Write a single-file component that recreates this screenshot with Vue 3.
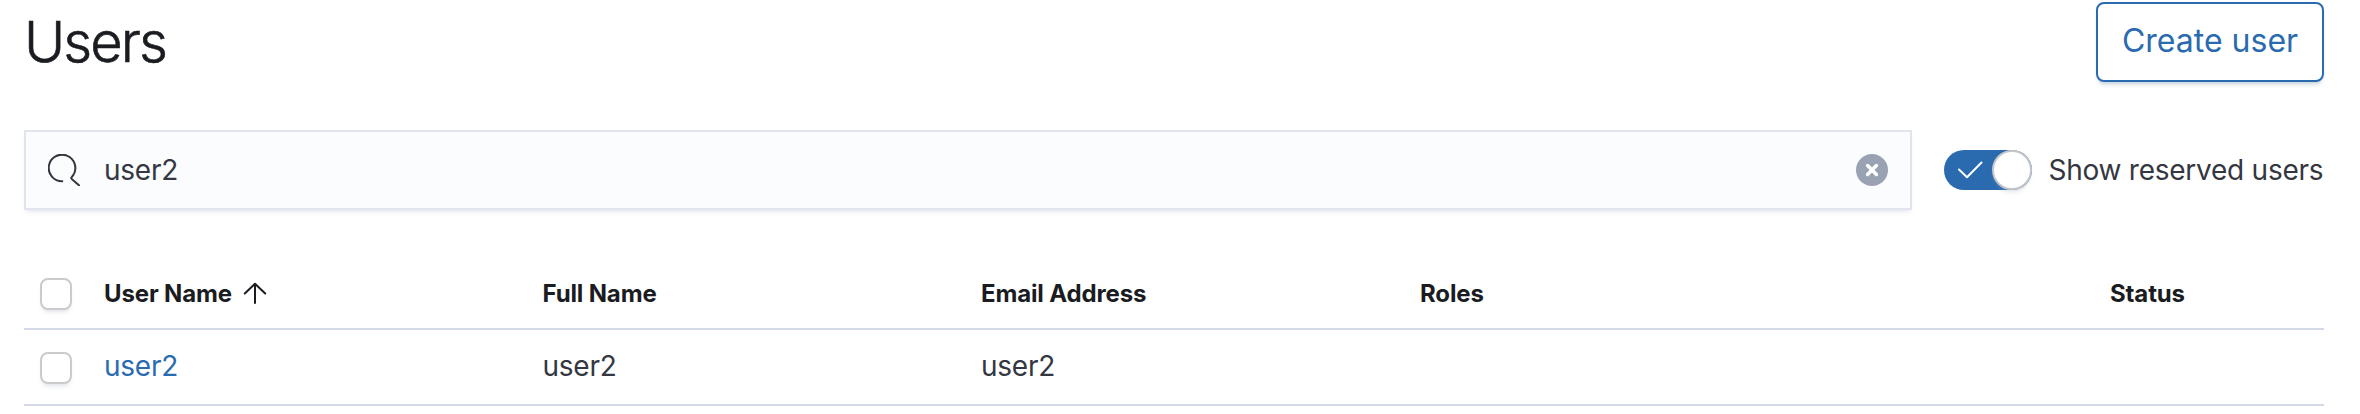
<script setup>
const headers = ['Full Name', 'Email Address', 'Roles', 'Status']
</script>

<template>
  <main class="page">
    <header class="top">
      <h1>Users</h1>
      <button class="create">Create user</button>
    </header>
    <div class="tools">
      <div class="search">
        <svg class="lens" width="32" height="32" viewBox="0 0 32 32"><path d="M14.3 27.3A13.3 13.3 0 1 1 25.2 21.2L23.2 23.8Q23.3 24.6 24 25.2L31 31.3" /></svg>
        <span class="query">user2</span>
        <svg class="clear" width="32" height="32" viewBox="0 0 32 32"><circle cx="16" cy="16" r="16" /><path d="M11.6 11.6L20.4 20.4M20.4 11.6L11.6 20.4" /></svg>
      </div>
      <div class="toggle"><svg width="26" height="20" viewBox="0 0 26 20"><path d="M2 9.5L10 17.2L24.5 2.5" /></svg><i></i></div>
      <span class="label">Show reserved users</span>
    </div>
    <div class="row head">
      <i class="box"></i>
      <span class="cell">User Name<svg class="arrow" width="24" height="24" viewBox="0 0 24 24"><path d="M12 22V3M1.8 12.5L12 2.8L22.2 12.5" /></svg></span>
      <span v-for="h in headers" :key="h" class="cell">{{ h }}</span>
    </div>
    <div class="row body">
      <i class="box"></i>
      <a class="cell">user2</a><span class="cell">user2</span><span class="cell">user2</span><span></span><span></span>
    </div>
  </main>
</template>

<style>
body { overflow: hidden; background: #fff; }
</style>
<style scoped>
.page { box-sizing: border-box; height: 414px; padding: 2px 36px 0 24px; font-family: Inter, sans-serif; font-size: 28px; letter-spacing: -0.25px; color: #343741; }
.top { display: flex; justify-content: space-between; height: 80px; }
h1 { margin: 0; font-size: 56px; line-height: 80px; font-weight: 300; letter-spacing: -1.95px; -webkit-text-stroke: 0.6px #1a1c21; color: #1a1c21; }
.create { box-sizing: border-box; width: 228px; height: 80px; padding: 0 0 3px; border: 2px solid #2a6bb0; border-radius: 8px; background: #fff; box-shadow: 0 4px 4px -2px rgba(54, 97, 126, 0.3); font: 32px/70px Inter, sans-serif; color: #2a6bb0; }
.tools { display: flex; align-items: center; height: 80px; margin-top: 48px; }
.search { box-sizing: border-box; display: flex; flex: none; align-items: center; width: 1888px; height: 80px; padding: 0 22px; border: 2px solid #e2e5ee; background: #fbfcfd; box-shadow: 0 4px 4px -2px rgba(152, 162, 179, 0.25); }
.query { flex: 1; margin-left: 24px; }
svg { display: block; fill: none; stroke: #343741; stroke-width: 2; stroke-linecap: round; stroke-linejoin: round; flex: none; }
.clear circle { fill: #98a2b3; stroke: none; }
.clear path { stroke: #fff; stroke-width: 3.6; }
.toggle { display: flex; flex: none; align-items: center; box-sizing: border-box; width: 88px; height: 40px; margin-left: 32px; padding-left: 13px; border-radius: 20px; background: #2a6bb0; }
.toggle svg { stroke: #fff; }
.toggle i { box-sizing: border-box; width: 40px; height: 40px; margin-left: 9px; border: 2px solid #c4c6ca; border-radius: 50%; background: #fff; box-shadow: 0 4px 4px -2px rgba(152, 162, 179, 0.3); }
.label { margin-left: 16.5px; white-space: nowrap; }
.row { display: grid; grid-template-columns: 80px 438.5px 438.5px 439px 690px 1fr; align-items: center; border-bottom: 2px solid #d3d9e6; }
.head { height: 70px; margin-top: 48px; font-size: 24px; font-weight: 700; letter-spacing: -0.14px; color: #1a1c21; }
.body { height: 74px; }
.box { box-sizing: border-box; width: 32px; height: 32px; margin: 2px 0 0 16px; border: 2px solid #c9cbcd; border-radius: 8px; background: #fff; box-shadow: 0 4px 4px -2px rgba(152, 162, 179, 0.3); }
.cell { display: flex; align-items: center; }
.body .cell { margin-top: -2px; }
.arrow { margin-left: 11px; stroke: #1a1c21; }
a { color: #2a6bb0; }
</style>
